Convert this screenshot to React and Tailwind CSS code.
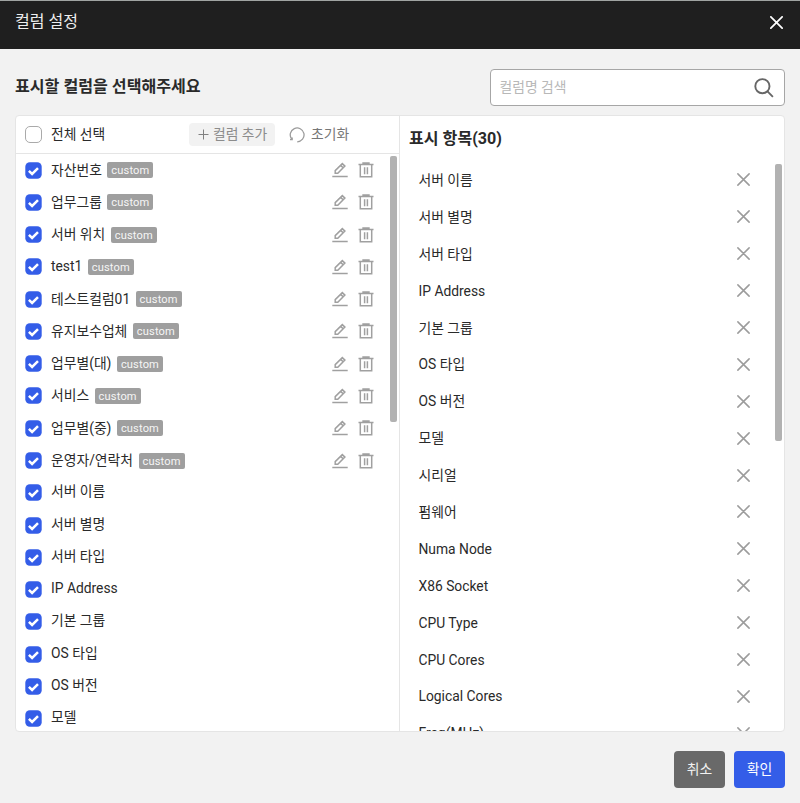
const customColumns = [
  '자산번호', '업무그룹', '서버 위치', 'test1', '테스트컬럼01',
  '유지보수업체', '업무별(대)', '서비스', '업무별(중)', '운영자/연락처',
];
const baseColumns = ['서버 이름', '서버 별명', '서버 타입', 'IP Address', '기본 그룹', 'OS 타입', 'OS 버전', '모델'];
const shownColumns = [
  ...baseColumns, '시리얼', '펌웨어', 'Numa Node', 'X86 Socket', 'CPU Type', 'CPU Cores', 'Logical Cores', 'Freq(MHz)',
];

function Cross({ className }) {
  return (
    <svg className={className} viewBox="0 0 12 12" fill="none" stroke="currentColor" strokeLinecap="round">
      <path d="M.8.8 11.2 11.2M11.2.8.8 11.2" />
    </svg>
  );
}

function Checked() {
  return (
    <svg className="h-[17px] w-[17px] shrink-0" viewBox="0 0 17 17" fill="none">
      <rect x=".3" y=".3" width="16.4" height="16.4" rx="4.5" fill="#345de8" />
      <path d="m3.9 8.9 3.2 3.1 5.9-5.8" stroke="#fff" strokeWidth="2.5" />
    </svg>
  );
}

function Pencil() {
  return (
    <svg className="h-4 w-4" viewBox="0 0 16 16" fill="none" stroke="#a0a0a0" strokeWidth="1.5">
      <path d="M3.2 11.3V8.6L10.3 1.6l2.6 2.5-7.1 7.2zM8.7 3.4l2.4 2.4" />
      <path d="M.3 14.5h15.4" />
    </svg>
  );
}

function Trash() {
  return (
    <svg className="h-4 w-4" viewBox="0 0 16 16" fill="none" stroke="#a0a0a0" strokeWidth="1.5">
      <path d="M.5 2.4h15M4.3 1.1h7.4M2.3 2.4v12.4h11.4V2.4M6.6 5.2v7M9.4 5.2v7" />
    </svg>
  );
}

function ColumnRow({ label, custom }) {
  return (
    <li className="flex h-[32.27px] shrink-0 items-center pl-[9px] pr-[25.5px]">
      <Checked />
      <span className={custom ? 'ml-[9px] -mt-px' : 'ml-[9px] -mt-[3px]'}>{label}</span>
      {custom && (
        <>
          <span className="ml-[5.5px] h-4 w-[46px] rounded-[2px] bg-[#9f9f9f] text-center text-[11.1px] leading-[17.5px] tracking-[.15px] text-[#f6f6f6]">
            custom
          </span>
          <span className="ml-auto flex items-center gap-[9.5px]">
            <Pencil />
            <Trash />
          </span>
        </>
      )}
    </li>
  );
}

export default function App() {
  return (
    <div className="flex h-[803px] w-[800px] flex-col overflow-hidden bg-[#f2f2f2] font-['Roboto','Noto_Sans_CJK_KR',sans-serif] text-[13.83px] leading-[20px] text-[#2a2a2a]">
      <header className="flex h-[49px] shrink-0 items-center justify-between border-t border-[#a0a4a2] bg-[#1f1f1f] pl-[15px] pr-[17px] pb-[6px] text-white">
        <h1 className="-mt-px text-[16px] text-[#eee]">컬럼 설정</h1>
        <Cross className="h-[13px] w-[13px] stroke-[1.6]" />
      </header>

      <div className="flex shrink-0 items-center justify-between px-[15px] pt-[20px]">
        <h2 className="-mt-[2px] text-[16.1px] font-bold">표시할 컬럼을 선택해주세요</h2>
        <div className="flex h-[37px] w-[295px] items-center justify-between rounded-[4px] border border-[#a6a6a6] bg-white pl-[8.5px] pr-[10px]">
          <span className="-mt-[2px] text-[#b8b8b8]">컬럼명 검색</span>
          <svg className="h-5 w-5" viewBox="0 0 20 20" fill="none" stroke="#666" strokeWidth="1.9">
            <circle cx="8.4" cy="8.2" r="7.1" />
            <path d="m13.5 13.4 5.4 5.4" />
          </svg>
        </div>
      </div>

      <main className="mx-[15px] mt-[9px] flex h-[617px] shrink-0 overflow-hidden rounded-[4px] border border-[#e5e5e5] bg-white">
        <section className="relative flex w-[384px] shrink-0 flex-col border-r border-[#e5e5e5]">
          <div className="flex h-[38px] shrink-0 items-center border-b border-[#e5e5e5] pl-[9px]">
            <span className="h-[17px] w-[17px] rounded-[5px] border border-[#aaa] bg-white" />
            <span className="-mt-[2px] ml-[9px] w-[138px]">전체 선택</span>
            <button className="flex h-[23px] w-[86px] items-center rounded-[4px] bg-[#f2f2f2] pl-[9px] text-[#8c8c8c]">
              <svg className="mr-[4px] h-[11px] w-[11px]" viewBox="0 0 11 11" stroke="#808080" strokeWidth="1">
                <path d="M5.5.5v10M.5 5.5h10" />
              </svg>
              <span className="-mt-[2px]">컬럼 추가</span>
            </button>
            <button className="ml-[14px] flex items-center text-[#777]">
              <svg className="mr-[6px] h-4 w-4" viewBox="0 0 16 16" fill="none" stroke="#9c9c9c" strokeWidth="1.3">
                <path d="M8.2 14.8A6.9 6.9 0 1 0 2.6 12M1 12.6h2.2v-2.2" />
              </svg>
              <span className="-mt-[2px]">초기화</span>
            </button>
          </div>
          <ul className="flex flex-col overflow-hidden">
            {customColumns.map((label) => <ColumnRow key={label} label={label} custom />)}
            {baseColumns.map((label) => <ColumnRow key={label} label={label} />)}
          </ul>
          <span className="absolute right-[2.5px] top-[40px] h-[266px] w-[7px] rounded-[2px] bg-[#b2b2b2]" />
        </section>

        <section className="relative flex flex-1 flex-col">
          <h3 className="mt-[12.5px] shrink-0 pl-[9px] text-[16.1px] font-bold">표시 항목(30)</h3>
          <ul className="mt-[13px] flex flex-col overflow-hidden">
            {shownColumns.map((label) => (
              <li key={label} className="flex h-[36.9px] shrink-0 items-center justify-between pl-[18.5px] pr-[34px]">
                <span>{label}</span>
                <Cross className="h-[13px] w-[13px] stroke-[1.4] text-[#9c9c9c]" />
              </li>
            ))}
          </ul>
          <span className="absolute right-[2.5px] top-[48px] h-[277px] w-[7px] rounded-[2px] bg-[#b2b2b2]" />
        </section>
      </main>

      <footer className="mt-[19px] flex shrink-0 justify-end gap-[9px] pr-[15px]">
        <button className="h-[37px] w-[51px] rounded-[4px] bg-[#696969] pb-[2px] text-[#f2f2f2]">취소</button>
        <button className="h-[37px] w-[51px] rounded-[4px] bg-[#345de8] pb-[2px] text-white">확인</button>
      </footer>
    </div>
  );
}
